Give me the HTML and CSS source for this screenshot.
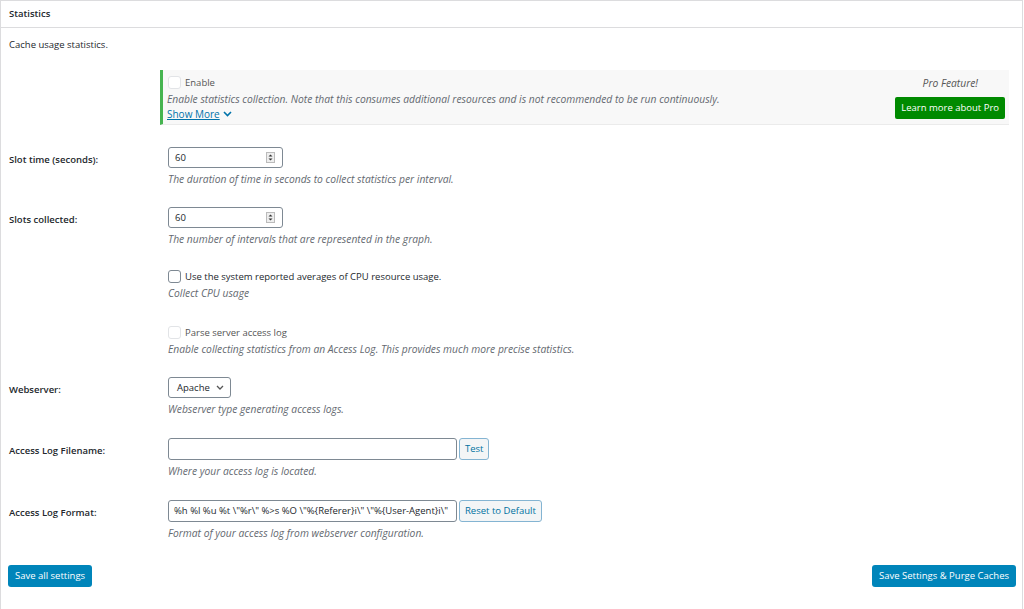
FILE: index.html
```html
<!DOCTYPE html>
<html>
<head>
<meta charset="utf-8">
<link rel="stylesheet" href="styles.css">
</head>
<body>
<div class="postbox">
  <h2 class="hndle">Statistics</h2>
  <div class="inside">
    <p class="intro">Cache usage statistics.</p>

    <div class="row row-pro">
      <div class="label"></div>
      <div class="field">
        <div class="pro-box">
          <div class="pro-main">
            <label class="check disabled"><span class="cb"></span>Enable</label>
            <p class="desc">Enable statistics collection. Note that this consumes additional resources and is not recommended to be run continuously.</p>
            <a class="show-more" href="#">Show More <svg width="9" height="6" viewBox="0 0 9 6"><path d="M1 1l3.5 3.5L8 1" fill="none" stroke="#0073aa" stroke-width="1.6"/></svg></a>
          </div>
          <div class="pro-side">
            <span class="pro-note">Pro Feature!</span>
            <a class="btn-green" href="#">Learn more about Pro</a>
          </div>
        </div>
      </div>
    </div>

    <div class="row row-slot">
      <div class="label">Slot time (seconds):</div>
      <div class="field">
        <div class="num"><span>60</span><span class="spin"><svg width="9" height="11" viewBox="0 0 9 11"><rect x="0.5" y="0.5" width="8" height="10" fill="#eee" stroke="#bbb"/><path d="M2.5 4.5L4.5 2.5L6.5 4.5z M2.5 6.5L4.5 8.5L6.5 6.5z" fill="#333"/></svg></span></div>
        <p class="desc">The duration of time in seconds to collect statistics per interval.</p>
      </div>
    </div>

    <div class="row row-slots">
      <div class="label">Slots collected:</div>
      <div class="field">
        <div class="num"><span>60</span><span class="spin"><svg width="9" height="11" viewBox="0 0 9 11"><rect x="0.5" y="0.5" width="8" height="10" fill="#eee" stroke="#bbb"/><path d="M2.5 4.5L4.5 2.5L6.5 4.5z M2.5 6.5L4.5 8.5L6.5 6.5z" fill="#333"/></svg></span></div>
        <p class="desc">The number of intervals that are represented in the graph.</p>
      </div>
    </div>

    <div class="row row-cpu">
      <div class="label"></div>
      <div class="field">
        <label class="check"><span class="cb"></span>Use the system reported averages of CPU resource usage.</label>
        <p class="desc">Collect CPU usage</p>
      </div>
    </div>

    <div class="row row-parse">
      <div class="label"></div>
      <div class="field">
        <label class="check disabled"><span class="cb"></span>Parse server access log</label>
        <p class="desc">Enable collecting statistics from an Access Log. This provides much more precise statistics.</p>
      </div>
    </div>

    <div class="row row-web">
      <div class="label">Webserver:</div>
      <div class="field">
        <div class="select">Apache <svg width="8" height="5" viewBox="0 0 8 5"><path d="M1 1l3 3 3-3" fill="none" stroke="#555" stroke-width="1.3"/></svg></div>
        <p class="desc">Webserver type generating access logs.</p>
      </div>
    </div>

    <div class="row row-file">
      <div class="label">Access Log Filename:</div>
      <div class="field">
        <div class="inline"><div class="text-input"></div><a class="btn-sec" href="#">Test</a></div>
        <p class="desc">Where your access log is located.</p>
      </div>
    </div>

    <div class="row row-format">
      <div class="label">Access Log Format:</div>
      <div class="field">
        <div class="inline"><div class="text-input">%h %l %u %t \"%r\" %&gt;s %O \"%{Referer}i\" \"%{User-Agent}i\"</div><a class="btn-sec" href="#">Reset to Default</a></div>
        <p class="desc">Format of your access log from webserver configuration.</p>
      </div>
    </div>

    <div class="actions">
      <a class="btn-primary" href="#">Save all settings</a>
      <a class="btn-primary" href="#">Save Settings &amp; Purge Caches</a>
    </div>
  </div>
</div>
</body>
</html>
```
FILE: styles.css
```css
* { box-sizing: border-box; }
html, body { margin: 0; padding: 0; background: #fff; }
body {
  font-family: "Open Sans", "Noto Sans", sans-serif;
  font-size: 9.5px;
  color: #23282d;
  height: 609px;
  overflow: hidden;
}
.postbox {
  border: 1px solid #dcdcde;
  border-bottom: none;
  margin-right: 1px;
  min-height: 620px;
}
.hndle {
  margin: 0;
  font-size: 9.5px;
  font-weight: 600;
  padding: 0 8px;
  height: 27px;
  line-height: 26px;
  border-bottom: 1px solid #dcdcde;
}
.inside { padding: 0 6px 0 8px; }
.intro { margin: 0; padding-top: 10px; line-height: 14px; height: 42px; }
.row {
  display: grid;
  grid-template-columns: 159px 1fr;
}
.row-pro { height: 77px; }
.row-slot { height: 60px; }
.row-slots { height: 63px; }
.row-cpu { height: 56px; }
.row-parse { height: 51px; }
.row-web { height: 61px; }
.row-file { height: 62px; }
.row-format { height: 65px; }
.row .label {
  font-weight: 600;
  padding-top: 6px;
  line-height: 14px;
}
.field { display: flex; flex-direction: column; align-items: flex-start; }
.pro-box {
  width: 849px;
  margin-left: -8px;
  background: #f8f8f8;
  border-left: 3px solid #46b450;
  border-bottom: 1px solid #ebebeb;
  display: flex;
  justify-content: space-between;
  padding: 6px 4px 4px 4px;
  height: 55px;
}
.pro-box .check .cb { margin-left: 1px; }
.pro-main { display: flex; flex-direction: column; }
.pro-side { display: flex; flex-direction: column; align-items: flex-end; }
.pro-note { font-style: italic; font-size: 10.3px; color: #555; margin: 1px 27px 0 0; line-height: 13px; }
.btn-green {
  margin-top: 7px;
  background: #008a00;
  color: #fff;
  text-decoration: none;
  border-radius: 2px;
  padding: 0 6px;
  height: 22px;
  line-height: 22px;
}
.check {
  display: flex;
  align-items: center;
  line-height: 13px;
  height: 13px;
}
.check .cb {
  width: 13px; height: 13px;
  border: 1px solid #7e8993;
  border-radius: 3px;
  margin-right: 4px;
  background: #fff;
}
.check.disabled { color: #555; }
.check.disabled .cb { border-color: #e2e4e7; }
.desc {
  margin: 0;
  font-style: italic;
  font-size: 10.3px;
  color: #646970;
  line-height: 14px;
  margin-top: 4px;
}
.check + .desc { margin-top: 3px; }
.pro-box .desc { margin-top: 3px; }
.show-more {
  color: #0073aa;
  text-decoration: underline;
  line-height: 14px;
  margin-top: 1px;
  display: inline-flex;
  align-items: center;
  gap: 3px;
  font-size: 10px;
}
.num {
  width: 115px; height: 21px;
  border: 1px solid #7e8993;
  border-radius: 3px;
  display: flex;
  align-items: center;
  justify-content: space-between;
  padding: 0 7px 0 6px;
}
.spin { display: flex; }
.select {
  height: 21px;
  border: 1px solid #7e8993;
  border-radius: 3px;
  padding: 0 6px 0 8px;
  display: flex;
  align-items: center;
  gap: 6px;
}
.inline { display: flex; align-items: center; }
.text-input {
  width: 289px; height: 22px;
  border: 1px solid #7e8993;
  border-radius: 3px;
  padding: 0 0 0 5px;
  line-height: 20px;
  white-space: nowrap;
  overflow: hidden;
}
.btn-sec {
  margin-left: 2px;
  height: 22px;
  line-height: 20px;
  border: 1px solid #84b4d2;
  border-radius: 3px;
  background: #f3f5f6;
  color: #0071a1;
  text-decoration: none;
  padding: 0 5px;
}
.actions {
  display: flex;
  justify-content: space-between;
  margin-left: -1px;
}
.btn-primary {
  background: #0085ba;
  color: #fff;
  text-decoration: none;
  border-radius: 3px;
  height: 22px;
  line-height: 22px;
  padding: 0 7px;
}
```
